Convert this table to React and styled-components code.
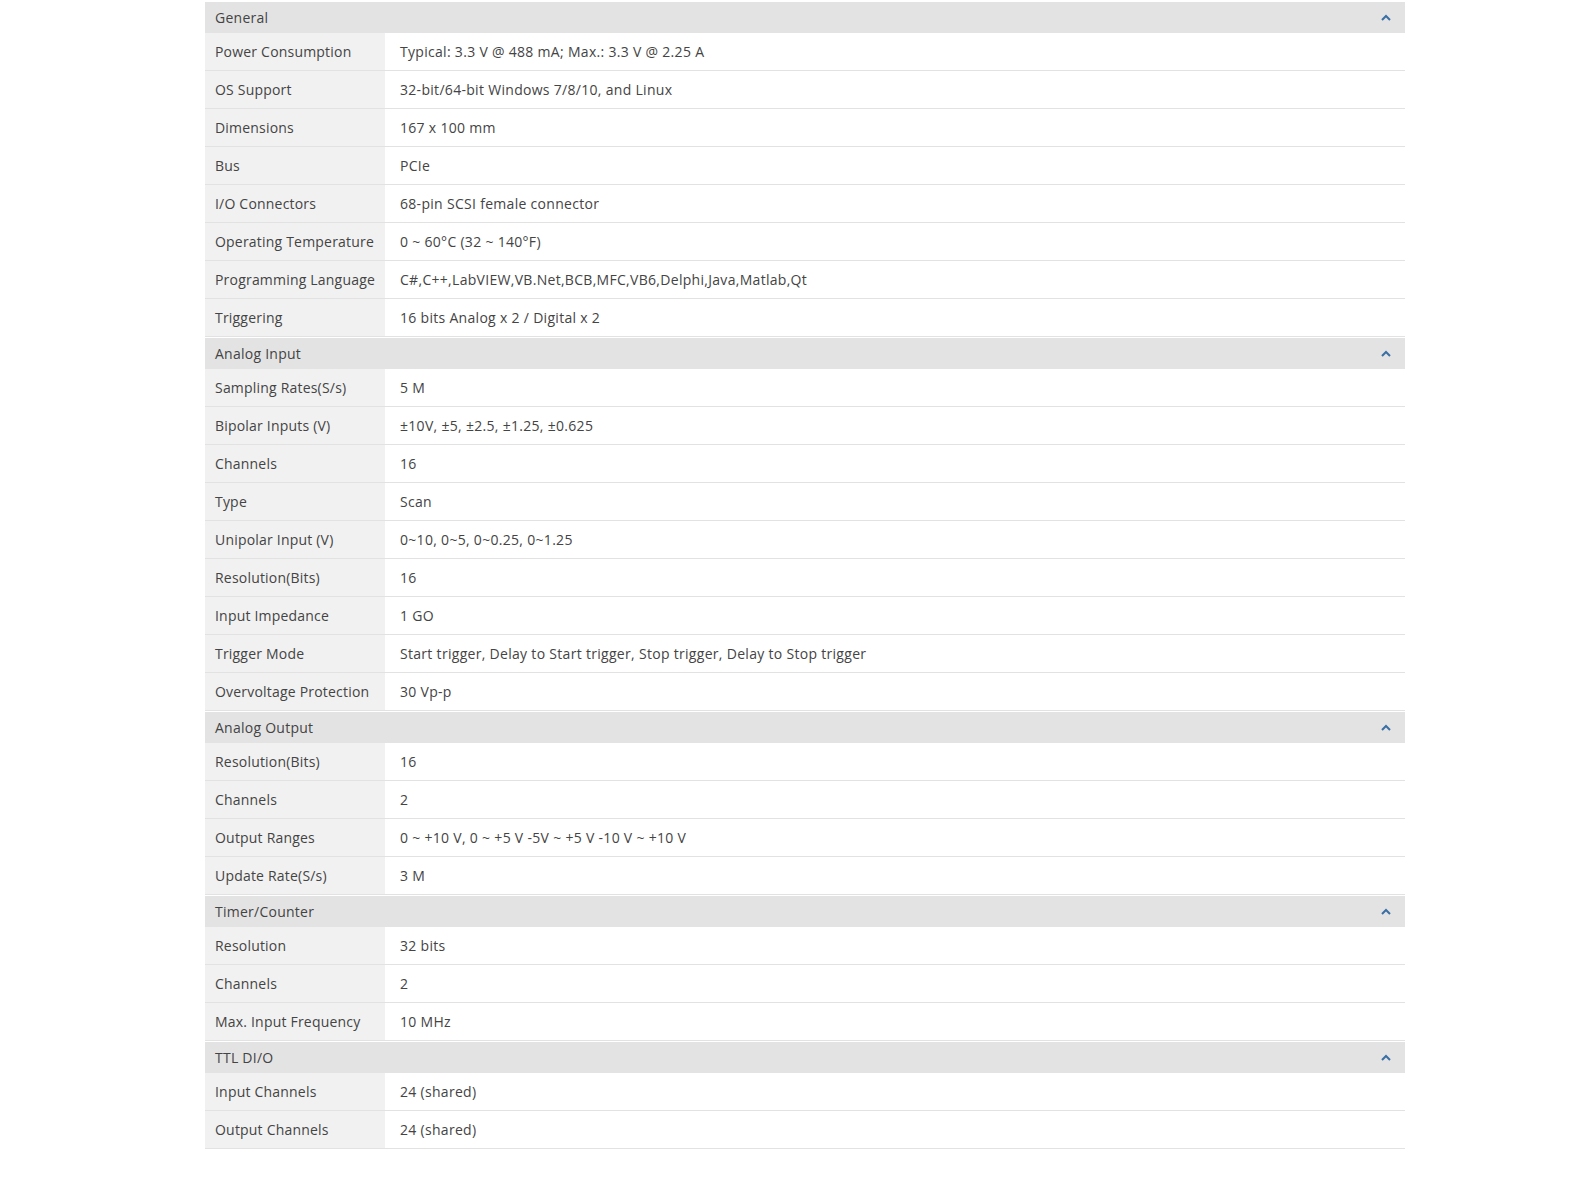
import styled, { createGlobalStyle } from "styled-components";

const GlobalStyle = createGlobalStyle`
  body {
    margin: 0;
    background: #fff;
    font-family: "Open Sans", "Noto Sans", Arial, sans-serif;
  }
`;

const Wrapper = styled.div`
  width: 1200px;
  margin-left: 205px;
  padding-top: 2px;
`;

const Section = styled.section`
  & + & {
    margin-top: 1px;
  }
`;

const Header = styled.div`
  display: flex;
  align-items: center;
  justify-content: space-between;
  height: 31px;
  padding: 0 14px 0 10px;
  background: #e3e3e3;
  color: #444;
  font-size: 14px;
  letter-spacing: 0.25px;
`;

const Row = styled.div`
  display: grid;
  grid-template-columns: 180px 1fr;
  height: 37px;
  border-bottom: 1px solid #e2e2e2;
  font-size: 14px;
  color: #444;
`;

const Label = styled.div`
  display: flex;
  align-items: center;
  padding-left: 10px;
  background: #f1f1f1;
  white-space: nowrap;
  letter-spacing: 0.2px;
`;

const Value = styled.div`
  display: flex;
  align-items: center;
  padding-left: 15px;
  background: #fff;
  letter-spacing: 0.3px;
`;

const Chevron = () => (
  <svg width="10" height="7" viewBox="0 0 10 7">
    <polyline points="1,6 5,2 9,6" fill="none" stroke="#3a6fa6" strokeWidth="2" />
  </svg>
);

const sections = [
  {
    title: "General",
    rows: [
      ["Power Consumption", "Typical: 3.3 V @ 488 mA; Max.: 3.3 V @ 2.25 A"],
      ["OS Support", "32-bit/64-bit Windows 7/8/10, and Linux"],
      ["Dimensions", "167 x 100 mm"],
      ["Bus", "PCIe"],
      ["I/O Connectors", "68-pin SCSI female connector"],
      ["Operating Temperature", "0 ~ 60°C (32 ~ 140°F)"],
      ["Programming Language", "C#,C++,LabVIEW,VB.Net,BCB,MFC,VB6,Delphi,Java,Matlab,Qt"],
      ["Triggering", "16 bits Analog x 2 / Digital x 2"],
    ],
  },
  {
    title: "Analog Input",
    rows: [
      ["Sampling Rates(S/s)", "5 M"],
      ["Bipolar Inputs (V)", "±10V, ±5, ±2.5, ±1.25, ±0.625"],
      ["Channels", "16"],
      ["Type", "Scan"],
      ["Unipolar Input (V)", "0~10, 0~5, 0~0.25, 0~1.25"],
      ["Resolution(Bits)", "16"],
      ["Input Impedance", "1 GO"],
      ["Trigger Mode", "Start trigger, Delay to Start trigger, Stop trigger, Delay to Stop trigger"],
      ["Overvoltage Protection", "30 Vp-p"],
    ],
  },
  {
    title: "Analog Output",
    rows: [
      ["Resolution(Bits)", "16"],
      ["Channels", "2"],
      ["Output Ranges", "0 ~ +10 V, 0 ~ +5 V -5V ~ +5 V -10 V ~ +10 V"],
      ["Update Rate(S/s)", "3 M"],
    ],
  },
  {
    title: "Timer/Counter",
    rows: [
      ["Resolution", "32 bits"],
      ["Channels", "2"],
      ["Max. Input Frequency", "10 MHz"],
    ],
  },
  {
    title: "TTL DI/O",
    rows: [
      ["Input Channels", "24 (shared)"],
      ["Output Channels", "24 (shared)"],
    ],
  },
];

export default function App() {
  return (
    <>
      <GlobalStyle />
      <Wrapper>
        {sections.map((s) => (
          <Section key={s.title}>
            <Header>
              <span>{s.title}</span>
              <Chevron />
            </Header>
            {s.rows.map(([k, v]) => (
              <Row key={k}>
                <Label>{k}</Label>
                <Value>{v}</Value>
              </Row>
            ))}
          </Section>
        ))}
      </Wrapper>
    </>
  );
}
